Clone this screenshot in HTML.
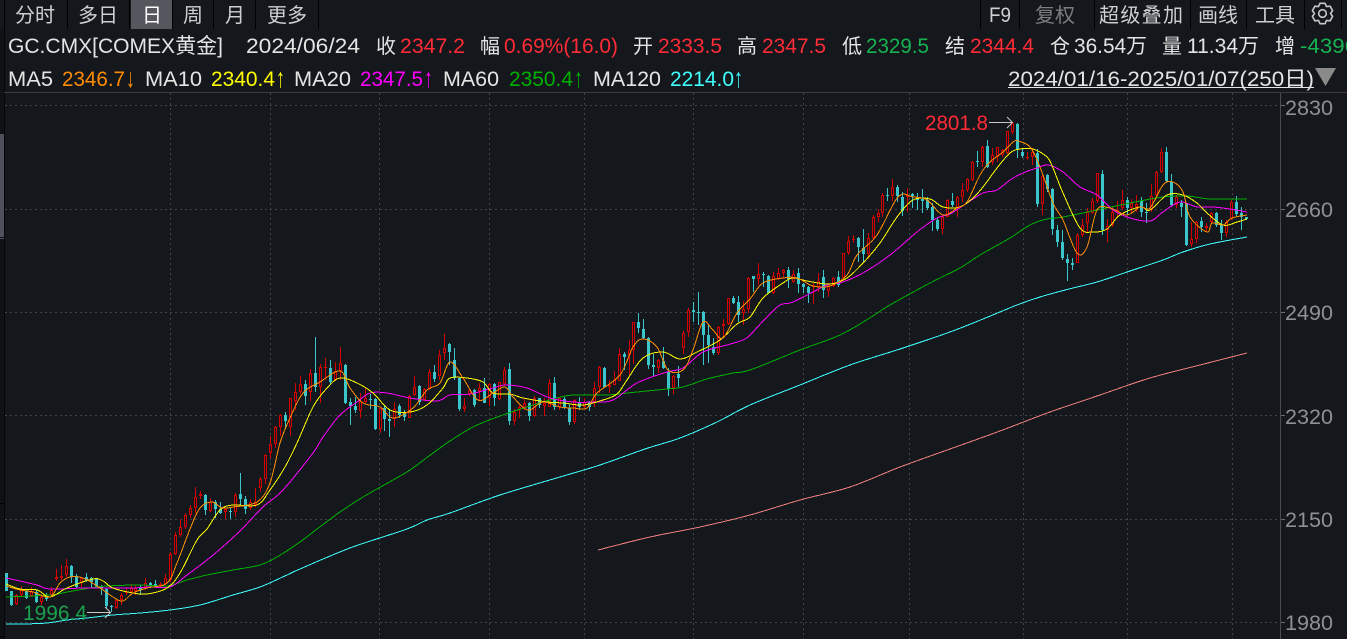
<!DOCTYPE html>
<html lang="zh">
<head>
<meta charset="utf-8">
<title>GC.CMX</title>
<style>
html,body{margin:0;padding:0;width:1347px;height:639px;overflow:hidden;background:#14171c}
svg{display:block;position:absolute;left:0;top:0}
text{font-family:"Liberation Sans","Noto Sans CJK SC",sans-serif;font-size:21px;fill:#e4e4e4;white-space:pre}
.c{font-size:20px}
.r{fill:#ff2b36}.g{fill:#16b350}
.ax{fill:#8d9095}
.t{fill:#cfcfcf;font-size:20px}
.ar{font-size:27px}
</style>
</head>
<body>
<svg width="1347" height="639" viewBox="0 0 1347 639" xmlns="http://www.w3.org/2000/svg">
<rect width="1347" height="639" fill="#14171c"/>
<!-- left strip -->
<rect x="0" y="29" width="4" height="610" fill="#0f1114"/>
<rect x="0" y="134" width="4" height="103" fill="#50505e"/>
<rect x="0" y="238" width="4" height="1" fill="#50505e"/>
<g shape-rendering="crispEdges">
<rect x="4" y="29" width="1" height="610" fill="#050506"/>
<rect x="0" y="503" width="4" height="1" fill="#000"/>
<rect x="0" y="636" width="4" height="1" fill="#000"/>
<!-- tabs -->
<rect x="131" y="0" width="41" height="29" fill="#56565f"/>
<g fill="#000">
<rect x="4" y="0" width="1" height="29"/><rect x="67" y="0" width="1" height="29"/><rect x="129" y="0" width="1" height="29"/><rect x="172" y="0" width="1" height="29"/><rect x="213" y="0" width="1" height="29"/><rect x="255" y="0" width="1" height="29"/><rect x="318" y="0" width="1" height="29"/>
<rect x="980" y="0" width="1" height="29"/><rect x="1019" y="0" width="1" height="29"/><rect x="1094" y="0" width="1" height="29"/><rect x="1190" y="0" width="1" height="29"/><rect x="1246" y="0" width="1" height="29"/><rect x="1304" y="0" width="1" height="29"/><rect x="1341" y="0" width="1" height="29"/>
</g>
<rect x="4" y="92" width="1343" height="1" fill="#3b3b3d"/>
<rect x="1280" y="93" width="1" height="546" fill="#4a4b4e"/>
<g stroke="#3f4247" stroke-width="1" stroke-dasharray="2 3" fill="none">
<path d="M5 105.5H1280M5 209.5H1280M5 312.5H1280M5 415.5H1280M5 519.5H1280M5 622.5H1280"/>
<path d="M170.5 93V639M270.5 93V639M379.5 93V639M489.5 93V639M584.5 93V639M693.5 93V639M803.5 93V639M909.5 93V639M1023.5 93V639M1127.5 93V639M1232.5 93V639"/>
</g>
<path d="M1281 105.5H1285M1281 209.5H1285M1281 312.5H1285M1281 415.5H1285M1281 519.5H1285M1281 622.5H1285" stroke="#6a6c70" fill="none"/>
</g>

<g id="candles" shape-rendering="crispEdges"></g>

<g id="mas" fill="none" stroke-width="1" shape-rendering="crispEdges" stroke-linejoin="round">
<polyline stroke="#f08080" points="598,550 650,537 700,527 750,515 800,500 850,487 900,467 950,449 1000,431 1050,412 1100,395 1150,378 1200,365 1247,353"/>
<polyline stroke="#40ffff" points="6,624 23,624 47,623 67,620 87,618 113,615 140,613 170,610 200,605 233,595 260,587 287,575 300,569 350,548 407,529 427,520 450,513 500,495 560,477 600,465 645,449 680,438 717,422 750,405 800,385 850,365 900,349 950,332 983,319 1017,305 1040,297 1069,289 1097,282 1130,271 1163,260 1183,252 1210,244 1247,237"/>
<polyline stroke="#00b000" points="6,597 50,595 67,592 90,588 107,586 140,585 167,586 187,580 207,575 233,570 260,565 277,557 300,542 317,529 340,512 363,497 393,480 410,470 433,453 450,441 473,427 500,416 530,406 557,398 573,395 607,395 637,392 667,389 683,387 707,379 733,373 750,370 800,350 840,335 868,319 890,305 930,283 960,268 980,255 1010,238 1030,225 1047,219 1063,217 1097,210 1130,203 1163,197 1187,196 1210,199 1247,199"/>
<polyline stroke="#ff00ff" points="6,578 20,581 37,585 50,589 83,588 100,588 117,588 133,588 150,587 170,587 187,575 207,560 227,543 242,529 263,507 283,490 313,453 323,437 340,415 357,402 370,393 387,393 410,398 437,401 450,395 470,394 493,388 505,385 527,388 550,398 573,402 593,402 613,400 637,383 667,372 683,368 703,352 727,345 743,340 750,335 765,319 780,305 793,302 827,285 840,283 863,273 890,255 917,232 937,218 950,214 967,203 983,193 997,190 1010,180 1023,173 1037,168 1048,165 1063,172 1080,187 1097,195 1113,210 1130,218 1150,221 1163,212 1180,202 1197,207 1213,207 1230,209 1247,212"/>
<polyline stroke="#ffff00" points="6,584 20,589 37,590 50,597 67,588 93,579 103,581 113,588 133,593 147,594 167,588 180,573 197,540 207,529 220,510 233,505 257,505 270,490 285,467 297,443 313,407 327,388 340,378 357,383 373,393 390,410 410,412 427,405 443,388 450,378 467,378 483,382 493,393 510,394 523,398 547,402 563,403 583,405 603,400 617,394 627,380 643,358 663,352 680,359 697,352 720,340 737,324 750,317 763,298 783,283 793,278 807,281 830,284 847,278 863,263 880,243 897,217 913,200 930,199 943,207 960,207 973,198 983,187 997,168 1010,153 1020,149 1033,149 1047,157 1053,168 1063,193 1080,228 1093,232 1107,229 1120,215 1140,207 1150,210 1167,195 1183,195 1197,203 1207,213 1223,225 1237,222 1247,219"/>
<polyline stroke="#ff9000" points="6,586 20,590 33,592 50,597 60,583 70,577 83,578 100,588 113,597 123,601 133,593 147,588 167,583 177,563 190,529 200,508 212,502 222,508 233,507 257,502 270,483 280,443 290,418 303,393 320,382 340,371 350,388 363,403 380,407 393,418 413,408 427,390 440,383 450,362 463,378 478,400 493,393 505,387 513,397 528,410 543,402 560,407 573,408 587,408 597,393 620,375 633,347 643,339 657,347 668,370 683,370 693,350 703,322 713,330 723,338 737,313 750,299 763,283 783,278 797,278 813,286 830,286 847,275 857,255 877,235 898,197 913,197 927,200 943,215 957,208 967,202 980,175 990,162 1003,152 1013,142 1018,141 1030,147 1040,167 1053,203 1063,220 1077,253 1087,247 1097,210 1110,208 1127,215 1140,207 1150,208 1163,185 1173,182 1183,192 1190,217 1207,232 1212,223 1223,225 1232,218 1247,215"/>
</g>

<!-- extreme markers -->
<text x="925" y="130" textLength="63" lengthAdjust="spacingAndGlyphs" class="r">2801.8</text>
<path d="M989 122.5H1012.5M1007 117L1012.5 122.5L1007 128" stroke="#c8c8c8" fill="none"/>
<text x="23" y="620" textLength="64" lengthAdjust="spacingAndGlyphs" style="fill:#1ba04e">1996.4</text>
<path d="M87 612.5H110.5M105 607L110.5 612.5L105 618" stroke="#c8c8c8" fill="none"/>

<!-- axis labels -->
<g>
<text class="ax" x="1285" y="115" textLength="48" lengthAdjust="spacingAndGlyphs">2830</text>
<text class="ax" x="1285" y="217" textLength="48" lengthAdjust="spacingAndGlyphs">2660</text>
<text class="ax" x="1285" y="320" textLength="48" lengthAdjust="spacingAndGlyphs">2490</text>
<text class="ax" x="1285" y="424" textLength="48" lengthAdjust="spacingAndGlyphs">2320</text>
<text class="ax" x="1285" y="527" textLength="48" lengthAdjust="spacingAndGlyphs">2150</text>
<text class="ax" x="1285" y="630" textLength="48" lengthAdjust="spacingAndGlyphs">1980</text>
</g>

<!-- tab labels -->
<text class="t" x="15" y="22">分时</text>
<text class="t" x="78" y="22">多日</text>
<text class="t" x="142" y="22" style="fill:#fff">日</text>
<text class="t" x="183" y="22">周</text>
<text class="t" x="225" y="22">月</text>
<text class="t" x="267" y="22">更多</text>
<text class="t" x="989" y="22" textLength="22" lengthAdjust="spacingAndGlyphs" style="font-size:21px">F9</text>
<text class="t" x="1035" y="22" style="fill:#7d7d7d">复权</text>
<text class="t" x="1099" y="22" textLength="84">超级叠加</text>
<text class="t" x="1198" y="22">画线</text>
<text class="t" x="1255" y="22">工具</text>
<g transform="translate(1322.5 13.5)" fill="none" stroke="#c8c8c8" stroke-width="1.6" stroke-linejoin="round">
<path d="M-2.5 -10.2L2.5 -10.2L4 -6.9L7.6 -7.3L10.1 -2.9L8 0L10.1 2.9L7.6 7.3L4 6.9L2.5 10.2L-2.5 10.2L-4 6.9L-7.6 7.3L-10.1 2.9L-8 0L-10.1 -2.9L-7.6 -7.3L-4 -6.9Z"/>
<circle r="3.8"/>
</g>

<!-- row 1 -->
<text x="8" y="53" textLength="215" lengthAdjust="spacingAndGlyphs">GC.CMX[COMEX黄金]</text>
<text x="246" y="53" textLength="114" lengthAdjust="spacingAndGlyphs">2024/06/24</text>
<text class="c" x="376" y="53">收</text>
<text class="r" x="400" y="53" textLength="65" lengthAdjust="spacingAndGlyphs">2347.2</text>
<text class="c" x="480" y="53">幅</text>
<text class="r" x="504" y="53" textLength="114" lengthAdjust="spacingAndGlyphs">0.69%(16.0)</text>
<text class="c" x="633" y="53">开</text>
<text class="r" x="658" y="53" textLength="64" lengthAdjust="spacingAndGlyphs">2333.5</text>
<text class="c" x="737" y="53">高</text>
<text class="r" x="762" y="53" textLength="64" lengthAdjust="spacingAndGlyphs">2347.5</text>
<text class="c" x="842" y="53">低</text>
<text class="g" x="866" y="53" textLength="63" lengthAdjust="spacingAndGlyphs">2329.5</text>
<text class="c" x="945" y="53">结</text>
<text class="r" x="970" y="53" textLength="64" lengthAdjust="spacingAndGlyphs">2344.4</text>
<text class="c" x="1050" y="53">仓</text>
<text x="1074" y="53" textLength="73" lengthAdjust="spacingAndGlyphs">36.54万</text>
<text class="c" x="1162" y="53">量</text>
<text x="1187" y="53" textLength="72" lengthAdjust="spacingAndGlyphs">11.34万</text>
<text class="c" x="1275" y="53">增</text>
<text class="g" x="1300" y="53" textLength="57" lengthAdjust="spacingAndGlyphs">-4396</text>

<!-- row 2 -->
<text x="8" y="86" textLength="45" lengthAdjust="spacingAndGlyphs">MA5</text>
<text x="62" y="86" textLength="63" lengthAdjust="spacingAndGlyphs" style="fill:#ff8c00">2346.7</text>
<text class="ar" x="126" y="87" textLength="9" lengthAdjust="spacingAndGlyphs" style="fill:#ff8c00">↓</text>
<text x="145" y="86" textLength="57" lengthAdjust="spacingAndGlyphs">MA10</text>
<text x="211" y="86" textLength="64" lengthAdjust="spacingAndGlyphs" style="fill:#ffff00">2340.4</text>
<text class="ar" x="276" y="87" textLength="9" lengthAdjust="spacingAndGlyphs" style="fill:#ffff00">↑</text>
<text x="294" y="86" textLength="57" lengthAdjust="spacingAndGlyphs">MA20</text>
<text x="360" y="86" textLength="63" lengthAdjust="spacingAndGlyphs" style="fill:#ff00ff">2347.5</text>
<text class="ar" x="424" y="87" textLength="9" lengthAdjust="spacingAndGlyphs" style="fill:#ff00ff">↑</text>
<text x="443" y="86" textLength="56" lengthAdjust="spacingAndGlyphs">MA60</text>
<text x="509" y="86" textLength="64" lengthAdjust="spacingAndGlyphs" style="fill:#00b000">2350.4</text>
<text class="ar" x="574" y="87" textLength="9" lengthAdjust="spacingAndGlyphs" style="fill:#00b000">↑</text>
<text x="593" y="86" textLength="68" lengthAdjust="spacingAndGlyphs">MA120</text>
<text x="670" y="86" textLength="64" lengthAdjust="spacingAndGlyphs" style="fill:#40ffff">2214.0</text>
<text class="ar" x="734" y="87" textLength="9" lengthAdjust="spacingAndGlyphs" style="fill:#40ffff">↑</text>
<text x="1008" y="86" textLength="306" lengthAdjust="spacingAndGlyphs">2024/01/16-2025/01/07(250日)</text>
<rect x="1008" y="87" width="306" height="1" fill="#e4e4e4"/>
<path d="M1315 68H1336L1325.5 86Z" fill="#8a8a8a"/>
</svg>
<script>
var d=[
[0,573,573,591,591],[0,591,591,605,606],[1,594,595,604,605],[1,586,590,595,597],[0,590,591,598,599],[1,587,591,596,597],[0,590,592,602,603],[1,595,597,602,605],[0,593,597,599,601],[1,587,590,595,597],
[1,569,577,579,581],[1,565,576,578,580],[1,559,566,575,577],[0,565,566,577,583],[0,574,576,587,588],[1,577,578,583,587],[0,573,577,581,582],[0,577,578,582,588],[0,578,579,587,588],[0,585,587,589,595],
[0,588,589,606,608],[0,605,606,607,612],[1,599,600,608,609],[1,593,595,600,605],[1,588,592,593,595],[1,584,588,592,593],[1,585,588,591,595],[0,585,587,590,595],[1,578,583,588,590],[0,582,583,586,588],
[0,580,584,586,587],[1,582,584,586,587],[1,574,578,584,585],[1,552,554,580,582],[1,532,535,554,555],[1,519,527,535,537],[1,513,515,527,529],[1,505,508,515,518],[1,487,497,508,513],[1,491,494,496,499],
[0,494,495,510,515],[1,498,502,511,512],[0,500,502,509,518],[0,502,509,513,514],[1,508,509,512,519],[0,508,511,512,519],[1,493,495,512,517],[0,473,494,499,505],[0,496,499,509,514],[1,499,502,508,510],
[1,488,502,505,507],[1,477,479,488,492],[1,454,455,479,484],[1,436,444,453,458],[1,426,427,444,448],[1,414,415,427,436],[0,412,415,421,428],[1,398,398,427,436],[1,383,392,401,410],[1,376,384,392,394],
[0,380,384,396,405],[1,369,373,392,401],[0,337,373,387,392],[1,364,367,387,403],[1,358,367,368,380],[0,360,368,382,385],[1,362,371,380,381],[1,347,363,371,380],[0,364,365,403,404],[0,398,402,406,425],
[0,397,406,410,413],[1,393,401,411,418],[1,388,398,402,404],[0,394,399,400,409],[0,398,399,429,430],[1,408,408,429,433],[0,406,408,419,431],[0,409,419,421,437],[1,402,409,419,427],[0,404,406,415,418],
[0,410,413,417,421],[1,395,396,418,418],[1,376,387,395,396],[0,385,386,402,405],[1,388,389,400,401],[1,369,372,389,390],[0,365,372,379,382],[1,350,355,376,380],[1,334,348,353,360],[0,343,344,352,365],
[0,348,360,378,380],[0,378,378,409,411],[1,398,406,409,412],[1,389,390,394,396],[0,389,390,405,407],[1,383,388,391,400],[0,378,388,403,403],[1,383,384,398,406],[0,383,384,398,406],[1,382,382,399,400],
[1,367,370,384,386],[0,363,369,421,425],[1,409,412,421,425],[1,405,407,410,418],[1,398,403,407,410],[0,402,403,416,421],[1,396,398,416,417],[0,398,398,405,408],[1,398,403,406,416],[1,379,383,407,407],
[0,377,383,407,410],[1,397,398,407,410],[0,397,399,408,409],[0,405,408,422,425],[1,399,400,422,424],[0,397,403,407,410],[1,398,402,407,408],[0,401,402,407,411],[1,382,388,402,407],[1,366,367,387,393],
[0,367,368,387,388],[1,380,385,387,393],[1,371,380,385,385],[1,348,354,381,381],[0,352,354,357,370],[1,340,350,355,375],[1,322,322,350,364],[0,313,322,328,333],[0,319,329,338,339],[0,337,338,365,369],
[0,354,365,367,376],[1,359,360,368,373],[0,347,361,368,369],[0,368,372,389,396],[1,375,376,388,394],[0,366,374,378,387],[1,331,333,348,354],[1,308,310,332,337],[0,302,310,312,322],[0,292,312,313,325],
[0,311,312,335,365],[0,325,335,345,363],[0,338,347,353,355],[1,326,327,353,355],[1,319,324,326,338],[1,298,298,324,325],[0,296,298,303,304],[0,296,302,315,322],[1,301,309,313,325],[1,277,278,309,313],
[0,276,276,279,292],[1,263,274,279,285],[0,272,274,275,287],[0,275,276,293,294],[1,272,276,293,294],[1,268,273,279,280],[1,269,270,273,278],[0,267,270,279,288],[1,270,274,282,283],[0,268,273,284,293],
[0,283,284,287,293],[0,286,287,293,303],[1,283,286,287,304],[1,273,281,287,292],[0,270,277,290,298],[1,283,286,291,297],[1,277,278,286,287],[0,271,277,285,287],[1,253,253,278,280],[1,236,241,253,255],
[1,235,239,240,243],[0,237,238,247,262],[0,229,248,254,262],[1,233,238,254,259],[1,215,217,238,240],[1,209,213,217,222],[1,193,195,213,217],[0,188,195,196,201],[1,179,187,196,201],[0,185,187,196,202],
[0,192,197,211,216],[1,188,195,197,212],[0,193,194,196,208],[0,193,197,200,210],[0,189,199,201,213],[0,197,200,208,210],[0,203,207,220,231],[0,218,220,229,231],[1,215,217,229,234],[1,199,200,217,217],
[0,193,201,205,207],[1,196,197,208,217],[1,183,190,197,202],[1,178,179,190,192],[1,161,162,180,181],[0,151,161,162,167],[1,146,147,162,167],[0,140,146,167,168],[1,148,155,162,165],[1,147,147,157,162],
[1,149,150,155,157],[1,131,131,153,154],[1,122,123,132,134],[0,123,124,149,158],[0,148,152,156,158],[1,152,157,158,160],[1,148,152,157,165],[0,149,153,204,207],[1,175,176,204,215],[0,174,175,189,192],
[0,188,189,229,235],[0,225,230,242,247],[0,230,242,258,260],[0,254,259,263,281],[0,258,263,265,270],[1,233,235,263,263],[1,219,225,235,237],[1,208,212,223,232],[1,198,201,213,214],[1,173,173,201,203],
[0,170,174,230,235],[1,219,226,230,242],[1,207,212,225,227],[1,201,210,212,218],[1,190,200,208,210],[0,197,200,208,215],[1,199,203,208,213],[1,195,204,207,212],[0,197,201,212,217],[0,203,212,213,223],
[1,184,196,210,212],[1,171,172,195,197],[1,148,152,172,173],[0,147,152,181,183],[0,174,182,205,207],[1,195,197,205,208],[0,200,203,207,217],[0,203,203,245,246],[1,222,239,244,247],[1,221,222,239,243],
[0,217,221,227,232],[1,223,226,228,231],[1,212,213,222,223],[0,212,213,225,227],[0,220,225,233,240],[1,220,222,233,237],[1,200,202,219,220],[0,196,202,214,216],[0,207,213,217,230],[0,217,217,219,220]
];
var s="";
for(var i=0;i<d.length;i++){
 var c=d[i],x=Math.round(6+4.98*i),col=c[0]?"#d60000":"#3ac6ca",h=Math.max(c[3]-c[2],1);
 s+='<rect x="'+x+'" y="'+c[1]+'" width="1" height="'+Math.max(c[2]-c[1],0)+'" fill="'+col+'"/>';
 s+='<rect x="'+x+'" y="'+(c[2]+h)+'" width="1" height="'+Math.max(c[4]-c[2]-h,0)+'" fill="'+col+'"/>';
 s+='<rect x="'+(x-1)+'" y="'+c[2]+'" width="3" height="'+h+'" fill="'+col+'"/>';
 if(c[0]&&h>=3)s+='<rect x="'+x+'" y="'+(c[2]+1)+'" width="1" height="'+(h-2)+'" fill="#14171c"/>';
}
document.getElementById("candles").innerHTML=s;
// smooth each moving-average polyline into a Catmull-Rom curve
var pl=document.querySelectorAll("#mas polyline"),out="";
for(var k=0;k<pl.length;k++){
 var p=pl[k].getAttribute("points").split(" ").map(function(v){return v.split(",").map(Number)});
 var e="M"+p[0][0]+" "+p[0][1];
 for(var j=0;j<p.length-1;j++){
  var a=p[Math.max(j-1,0)],b=p[j],n=p[j+1],m=p[Math.min(j+2,p.length-1)];
  e+="C"+(b[0]+(n[0]-a[0])/6).toFixed(1)+" "+(b[1]+(n[1]-a[1])/6).toFixed(1)+" "+(n[0]-(m[0]-b[0])/6).toFixed(1)+" "+(n[1]-(m[1]-b[1])/6).toFixed(1)+" "+n[0]+" "+n[1];
 }
 out+='<path stroke="'+pl[k].getAttribute("stroke")+'" d="'+e+'"/>';
}
document.getElementById("mas").innerHTML=out;
</script>
</body>
</html>
